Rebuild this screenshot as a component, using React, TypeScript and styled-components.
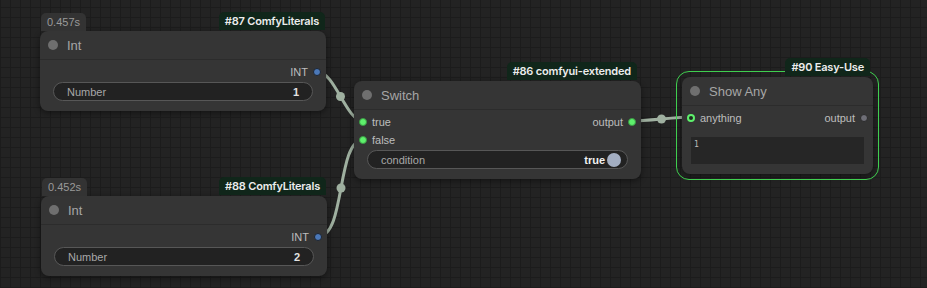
import React from 'react';
import styled, { createGlobalStyle } from 'styled-components';

const GlobalStyle = createGlobalStyle`
  html, body {
    margin: 0;
    padding: 0;
    background: #222;
  }
  body {
    font-family: "Liberation Sans", Arial, sans-serif;
  }
`;

const Canvas = styled.div`
  position: relative;
  width: 927px;
  height: 288px;
  overflow: hidden;
  background-color: #232323;
  background-image:
    repeating-linear-gradient(90deg, #1c1c1c 0 1px, transparent 1px 10px),
    repeating-linear-gradient(0deg, #1c1c1c 0 1px, transparent 1px 10px);
`;

const Links = styled.svg`
  position: absolute;
  left: 0;
  top: 0;
  width: 927px;
  height: 288px;
`;

const Node = styled.div<{ $x: number; $y: number; $w: number; $selected?: boolean }>`
  position: absolute;
  left: ${p => p.$x}px;
  top: ${p => p.$y}px;
  width: ${p => p.$w}px;
  background: #353535;
  border-radius: 8px;
  box-shadow: 0 2px 6px rgba(0, 0, 0, 0.45);
  color: #bbb;
  font-size: 11px;

  ${p => p.$selected && `
    &::before {
      content: '';
      position: absolute;
      inset: -6px;
      border: 1.5px solid #3fcf4f;
      border-radius: 13px;
      pointer-events: none;
    }
  `}
`;

const TitleBar = styled.div`
  display: flex;
  align-items: center;
  gap: 9px;
  height: 28px;
  padding: 0 0 0 8px;
  border-bottom: 1px solid #2c2c2c;
  font-size: 13px;
  color: #a6a6a6;
`;

const TitleDot = styled.span`
  width: 10px;
  height: 10px;
  border-radius: 50%;
  background: #6f6f6f;
`;

const Body = styled.div`
  display: flex;
  flex-direction: column;
  padding: 3px 0 10px;
`;

const SlotRow = styled.div`
  display: flex;
  align-items: center;
  justify-content: space-between;
  height: 18px;
  padding: 0 5px;
`;

const Slot = styled.div<{ $right?: boolean }>`
  display: flex;
  align-items: center;
  gap: 5px;
  flex-direction: ${p => (p.$right ? 'row-reverse' : 'row')};
  color: #bdbdbd;
`;

const Dot = styled.span<{ $kind: 'int' | 'live' | 'ring' | 'idle' }>`
  width: 8px;
  height: 8px;
  border-radius: 50%;
  box-sizing: border-box;
  ${p => {
    switch (p.$kind) {
      case 'int': return 'background: #4b78b8; border: 1.5px solid #1d2430;';
      case 'live': return 'background: #5ef06c; border: 1px solid #3a9a44;';
      case 'ring': return 'background: #1f2a20; border: 2.5px solid #5ef06c;';
      default: return 'background: #6e6e76; border: 1.5px solid #2a2a2a;';
    }
  }}
`;

const Widget = styled.div`
  display: flex;
  align-items: center;
  justify-content: space-between;
  height: 19px;
  margin: 1px 13px 0;
  padding: 0 13px;
  box-sizing: border-box;
  background: #222;
  border: 1px solid #575757;
  border-radius: 10px;
  color: #a8a8a8;
`;

const WidgetValue = styled.span`
  color: #e2e2e2;
  font-weight: 700;
`;

const Toggle = styled.span`
  display: flex;
  align-items: center;
  gap: 2px;
  margin-right: -7px;
  color: #f0f0f0;
  font-weight: 700;
`;

const Knob = styled.span`
  width: 14px;
  height: 14px;
  border-radius: 50%;
  background: #a3aec2;
`;

const TextArea = styled.div`
  height: 27px;
  margin: 10px 9px 0;
  padding: 3px;
  box-sizing: border-box;
  background: #262626;
  color: #bbb;
  font-family: "DejaVu Sans Mono", monospace;
  font-size: 8px;
`;

const Timing = styled.div`
  position: absolute;
  left: 1px;
  top: -18px;
  height: 18px;
  padding: 0 6px;
  display: flex;
  align-items: center;
  background: #333;
  border-radius: 5px 5px 0 0;
  color: #9a9a9a;
  font-size: 11px;
`;

const Badge = styled.div<{ $right: number }>`
  position: absolute;
  right: ${p => p.$right}px;
  top: -19px;
  height: 18px;
  padding: 0 6px;
  display: flex;
  align-items: center;
  background: #10261a;
  border-radius: 5px 5px 0 0;
  color: #ececec;
  font-family: Inter, "Liberation Sans", sans-serif;
  font-size: 11px;
  font-weight: 600;
  white-space: nowrap;
  letter-spacing: -0.2px;
`;

type Pt = [number, number];

const bezier = (a: Pt, b: Pt) => {
  const d = Math.hypot(b[0] - a[0], b[1] - a[1]) * 0.25;
  const c1: Pt = [a[0] + d, a[1]];
  const c2: Pt = [b[0] - d, b[1]];
  const mid: Pt = [
    (a[0] + 3 * c1[0] + 3 * c2[0] + b[0]) / 8,
    (a[1] + 3 * c1[1] + 3 * c2[1] + b[1]) / 8,
  ];
  return { d: `M${a[0]},${a[1]} C${c1[0]},${c1[1]} ${c2[0]},${c2[1]} ${b[0]},${b[1]}`, mid };
};

const links: [Pt, Pt][] = [
  [[318, 72], [363, 121]],
  [[319, 236], [363, 140]],
  [[632, 121], [691, 117]],
];

const IntNode: React.FC<{ x: number; y: number; id: number; time: string; value: number }> = ({ x, y, id, time, value }) => (
  <Node $x={x} $y={y} $w={286}>
    <Timing>{time}</Timing>
    <Badge $right={1}>#{id} ComfyLiterals</Badge>
    <TitleBar>
      <TitleDot />
      Int
    </TitleBar>
    <Body>
      <SlotRow>
        <span />
        <Slot $right>
          <Dot $kind="int" />
          INT
        </Slot>
      </SlotRow>
      <Widget>
        <span>Number</span>
        <WidgetValue>{value}</WidgetValue>
      </Widget>
    </Body>
  </Node>
);

export default function App() {
  return (
    <Canvas>
      <GlobalStyle />
      <Links viewBox="0 0 927 288">
        {links.map(([a, b], i) => {
          const { d, mid } = bezier(a, b);
          return (
            <g key={i}>
              <path d={d} fill="none" stroke="#9fb0a0" strokeWidth={3} />
              <circle cx={mid[0]} cy={mid[1]} r={4.5} fill="#9fb0a0" />
            </g>
          );
        })}
      </Links>

      <IntNode x={40} y={31} id={87} time="0.457s" value={1} />
      <IntNode x={41} y={196} id={88} time="0.452s" value={2} />

      <Node $x={354} $y={81} $w={287}>
        <Badge $right={4}>#86 comfyui-extended</Badge>
        <TitleBar>
          <TitleDot />
          Switch
        </TitleBar>
        <Body>
          <SlotRow>
            <Slot>
              <Dot $kind="live" />
              true
            </Slot>
            <Slot $right>
              <Dot $kind="live" />
              output
            </Slot>
          </SlotRow>
          <SlotRow>
            <Slot>
              <Dot $kind="live" />
              false
            </Slot>
          </SlotRow>
          <Widget>
            <span>condition</span>
            <Toggle>
              true
              <Knob />
            </Toggle>
          </Widget>
        </Body>
      </Node>

      <Node $x={682} $y={77} $w={191} $selected>
        <Badge $right={3}>#90 Easy-Use</Badge>
        <TitleBar>
          <TitleDot />
          Show Any
        </TitleBar>
        <Body>
          <SlotRow>
            <Slot>
              <Dot $kind="ring" />
              anything
            </Slot>
            <Slot $right>
              <Dot $kind="idle" />
              output
            </Slot>
          </SlotRow>
          <TextArea>1</TextArea>
        </Body>
      </Node>
    </Canvas>
  );
}
